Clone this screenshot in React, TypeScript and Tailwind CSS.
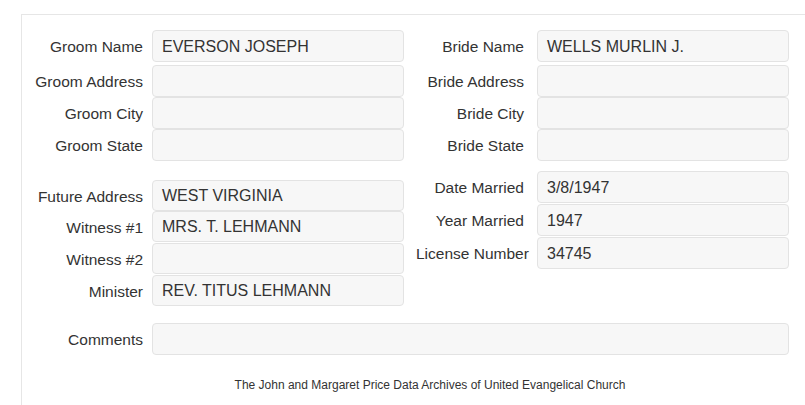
import React from "react";

const inputCls =
  "flex items-center rounded-[4px] border border-[#e3e3e3] bg-[#f7f7f7] pl-[9px] text-[16px] text-[#333] whitespace-nowrap";

const labelCls = "shrink-0 pt-[2px] text-right text-[15.5px] text-[#333] whitespace-nowrap";

function LRow({ label, value, h = "h-[32px]", w = "w-[252px]", extra = "" }: { label: string; value?: string; h?: string; w?: string; extra?: string }) {
  return (
    <div className={`flex items-center ${extra}`}>
      <div className={`w-[121px] ${labelCls}`}>{label}</div>
      <div className={`ml-[9px] ${w} ${h} ${inputCls}`}>
        <span className="pt-[1px]">{value}</span>
      </div>
    </div>
  );
}

function RRow({ label, value, extra = "" }: { label: string; value?: string; extra?: string }) {
  return (
    <div className={`flex items-center ${extra}`}>
      <div className={`w-[108px] ${labelCls}`}>{label}</div>
      <div className={`ml-[13px] w-[252px] h-[32px] ${inputCls}`}>
        <span className="pt-[1px]">{value}</span>
      </div>
    </div>
  );
}

export default function App() {
  return (
    <div className="w-[805px] h-[405px] overflow-hidden bg-white" style={{ fontFamily: '"Liberation Sans", Arial, sans-serif' }}>
      <div className="ml-[21px] mt-[14px] border-l border-t border-[#e6e6e6] h-[400px] pt-[15px]">
        <div className="flex">
          <div className="w-[382px] shrink-0 flex flex-col">
            <LRow label="Groom Name" value="EVERSON JOSEPH" extra="mb-[3px]" />
            <LRow label="Groom Address" />
            <LRow label="Groom City" />
            <LRow label="Groom State" />
            <LRow label="Future Address" value="WEST VIRGINIA" h="h-[31px]" extra="mt-[19px]" />
            <LRow label="Witness #1" value="MRS. T. LEHMANN" h="h-[31px]" />
            <LRow label="Witness #2" h="h-[31px]" extra="mt-[1px]" />
            <LRow label="Minister" value="REV. TITUS LEHMANN" h="h-[31px]" w="w-[301px]" extra="mt-[1px]" />
          </div>
          <div className="ml-[12px] flex flex-col">
            <RRow label="Bride Name" value="WELLS MURLIN J." extra="mb-[3px]" />
            <RRow label="Bride Address" />
            <RRow label="Bride City" />
            <RRow label="Bride State" />
            <RRow label="Date Married" value="3/8/1947" extra="mt-[10px]" />
            <RRow label="Year Married" value="1947" extra="mt-[1px]" />
            <RRow label="License Number" value="34745" extra="mt-[1px]" />
          </div>
        </div>
        <LRow label="Comments" w="w-[637px]" extra="mt-[17px]" />
        <div className="mt-[21px] pl-[33px] text-center text-[12px] text-[#333]">
          The John and Margaret Price Data Archives of United Evangelical Church
        </div>
      </div>
    </div>
  );
}
